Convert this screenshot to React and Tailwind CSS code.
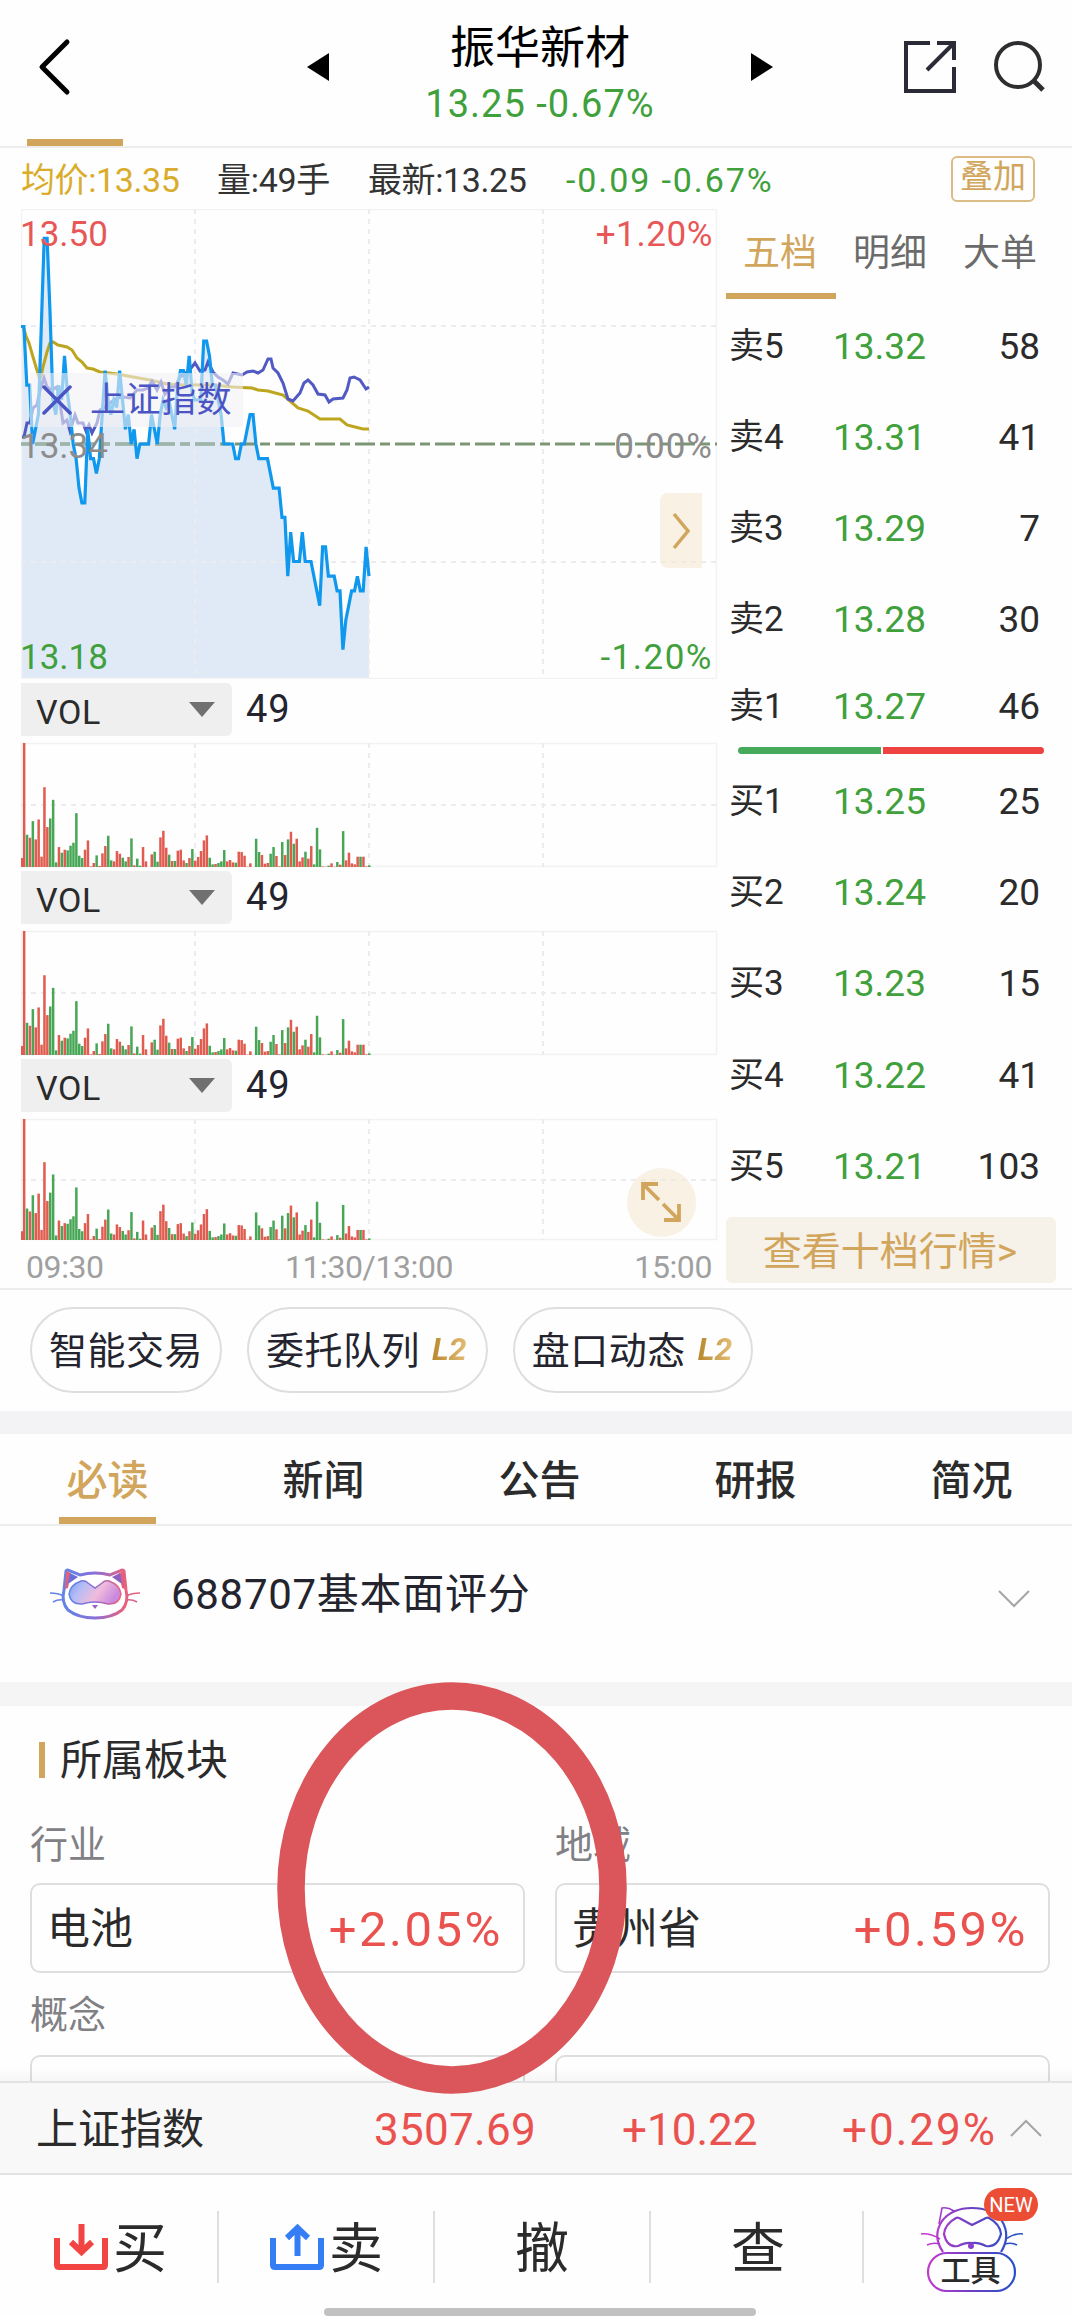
import React, { useState } from "react";

const PRICES = [
  42, 42, 38, 38, 34, 35, 36, 42, 48, 48, 43, 37, 36, 38, 37, 40, 37.5, 36, 34, 33,
  31, 30, 30, 35, 33, 33, 32, 33, 36, 39, 37, 36, 37, 36.5, 39, 37, 35, 36, 34, 35,
  33, 34, 34, 34, 34, 36, 35, 34, 36, 37, 36.5, 37, 36, 35, 38, 39, 39, 38, 40, 37.5,
  37, 37, 37, 41, 41, 40, 38, 38, 37, 36, 34, 34, 34, 34, 33, 33, 34, 34, 35, 36,
  36, 34, 33, 33, 33, 33, 32, 31, 31, 31, 29, 29, 25, 28, 26, 26, 26, 28, 26, 26,
  26, 25, 24, 23, 27, 27, 25, 25, 25, 24, 24, 20, 22, 23, 24, 24, 25, 24, 24, 27, 25,
];

const AVG_LINE =
  "2,117 5,127 8,134 12,148 18,168 20,168 22,158 26,143 29,134 32,133 37,136 46,138 51,141 56,149 61,153 66,159 72,160 79,163 96,165 112,168 129,171 146,175 162,176 192,176 212,178 231,179 237,181 247,182 262,186 269,192 277,199 287,202 299,210 319,210 326,216 334,218 342,220 348,220";

const INDEX_LINE =
  "1,228 3,228 6,214 9,214 12,199 16,196 19,181 23,169 26,178 31,181 36,178 39,194 42,214 46,211 49,222 54,206 57,214 62,214 65,222 68,216 71,224 76,214 79,201 84,198 89,194 96,189 102,188 109,189 116,181 122,181 127,179 131,172 136,181 140,173 144,185 149,178 154,178 159,168 166,163 171,158 174,154 179,162 184,161 187,153 192,163 197,168 202,171 207,175 212,164 221,166 226,163 232,162 237,164 242,161 247,150 250,150 252,159 257,164 262,174 267,190 272,192 279,184 283,174 287,171 292,176 297,185 304,186 308,193 312,190 322,189 326,181 329,169 333,168 339,171 345,180 348,178";

// one entry per minute: height (max 373) and direction
const VOLUMES =
  "27r 373r 97g 88r 138g 83r 143r 31r 240r 120r 146g 202g 14g 60r 43g 52r 50g 64g 73g 162g 34g 27g 52r 80r 2r 12r 35g 3r 41r 63r 94g 20g 17r 48r 40r 28g 17g 30r 86g 5r 25g 4g 60r 17r 0r 38r 46g 16g 89r 109r 58r 37g 18r 18g 49r 52r 20r 12g 27r 54g 19r 30r 48r 80r 95r 28g 8g 9r 12g 17g 51g 17r 21r 14r 13g 46r 45r 34r 1r 11r 0r 85g 45g 36r 10r 12r 40g 60g 33r 2r 75g 36r 83g 106r 70g 85r 17r 29r 46g 25r 63r 8g 118g 53g 2r 1r 4g 11r 1r 15g 7r 108g 20r 43r 11r 8r 31r 31g 31r 2r 5g"
    .split(" ")
    .map((v) => ({ size: parseInt(v, 10) / 373, up: v.endsWith("r") }));

const SELLS = [
  ["卖5", "13.32", "58"],
  ["卖4", "13.31", "41"],
  ["卖3", "13.29", "7"],
  ["卖2", "13.28", "30"],
  ["卖1", "13.27", "46"],
];

const BUYS = [
  ["买1", "13.25", "25"],
  ["买2", "13.24", "20"],
  ["买3", "13.23", "15"],
  ["买4", "13.22", "41"],
  ["买5", "13.21", "103"],
];

const STEP = 348 / 120;

const Grid = ({ height, rows }) => (
  <g stroke="#ececee" strokeWidth="2">
    <path d={`M0.5 0V${height}M695.5 0V${height}M0 0.5H696M0 ${height - 0.5}H696`} stroke="#f2f2f3" strokeWidth="1.5" />
    {[174, 348, 522].map((x) => (
      <path key={x} d={`M${x} 0V${height}`} strokeDasharray="5 5" />
    ))}
    {rows.map((y) => (
      <path key={y} d={`M0 ${y}H696`} strokeDasharray="5 5" />
    ))}
  </g>
);

const PriceChart = () => {
  const points = PRICES.map((p, i) => `${(i * STEP).toFixed(1)},${(235 - (p - 34) * 14.69).toFixed(1)}`).join(" ");
  return (
    <div className="relative h-[470px] w-[696px] text-[35px] leading-none">
      <svg width="696" height="470" className="block">
        <polygon points={`0,470 ${points} 348,470`} fill="#e0eaf6" />
        <Grid height={470} rows={[117, 353]} />
        <path d="M0 235H696" stroke="#7b9575" strokeWidth="3" strokeDasharray="20 5 10 5" strokeDashoffset="26" />
        <path d="M0 235H200" stroke="#9db4ab" strokeWidth="3" strokeDasharray="20 5 10 5" strokeDashoffset="26" />
        <polyline points={AVG_LINE} fill="none" stroke="#bda51f" strokeWidth="3" />
        <polyline points={INDEX_LINE} fill="none" stroke="#5159c2" strokeWidth="3" />
        <polyline points={points} fill="none" stroke="#0f98ee" strokeWidth="3.2" />
      </svg>

      {/* Overlay index tag */}
      <div className="absolute left-[9px] top-[164px] flex h-[54px] w-[213px] items-center bg-[#f2f0f3]/60 text-[#4a54c4]">
        <svg width="30" height="30" viewBox="0 0 30 30" className="ml-[12px] shrink-0">
          <path d="M2 2L28 28M28 2L2 28" stroke="#4a54c4" strokeWidth="3.5" strokeLinecap="round" />
        </svg>
        <span className="ml-[18px] whitespace-nowrap tracking-[0.5px]">上证指数</span>
      </div>

      <span className="absolute left-[-1px] top-[8px] text-[#e85757]">13.50</span>
      <span className="absolute right-[4px] top-[8px] tracking-[0.6px] text-[#e85757]">+1.20%</span>
      <span className="absolute left-[-1px] top-[220px] text-[#8c8c8c]">13.34</span>
      <span className="absolute right-[4px] top-[220px] tracking-[1px] text-[#8c8c8c]">0.00%</span>
      <span className="absolute left-[-1px] top-[431px] text-[#3fa03c]">13.18</span>
      <span className="absolute right-[4px] top-[431px] tracking-[1.5px] text-[#3fa03c]">-1.20%</span>

      <button className="absolute left-[639px] top-[284px] flex h-[75px] w-[42px] items-center justify-center rounded-l-lg bg-[#f4e8d2]/60">
        <svg width="20" height="38" viewBox="0 0 20 38">
          <path d="M3 2L17 19L3 36" fill="none" stroke="#d1a65c" strokeWidth="3.5" />
        </svg>
      </button>
    </div>
  );
};

const VolumePanel = ({ height }) => (
  <div>
    <div className="flex h-[64px] items-start pt-[4px]">
      <div className="flex h-[53px] w-[211px] items-center justify-between rounded-r-md bg-[#efefef] pl-[15px] pr-[16px]">
        <span className="pt-[4px] text-[34px] leading-none tracking-[0.6px] text-[#2b2b2b]">VOL</span>
        <svg width="28" height="15" viewBox="0 0 28 15">
          <path d="M1 0H27L14 15Z" fill="#707070" />
        </svg>
      </div>
      <span className="ml-[14px] mt-[7px] text-[38px] leading-none tracking-[1px] text-[#24242e]">49</span>
    </div>
    <svg width="696" height={height} className="block overflow-visible">
      <Grid height={height} rows={[Math.round(height / 2)]} />
      {VOLUMES.map((v, i) => (
        <rect
          key={i}
          x={Math.max(0, i * STEP - 1)}
          y={height - v.size * height}
          width="2.5"
          height={v.size * height}
          fill={v.up ? "#e05c50" : "#47a757"}
        />
      ))}
    </svg>
  </div>
);

const OrderRow = ({ row, className }) => (
  <div className={`flex items-center pt-[3px] text-[37px] leading-none ${className}`}>
    <span className="w-[104px] text-[35px] text-[#2b2b2b]">{row[0]}</span>
    <span className="text-[#3fa03c]">{row[1]}</span>
    <span className="ml-auto text-[#2b2b2b]">{row[2]}</span>
  </div>
);

const OrderBook = () => {
  const [tab, setTab] = useState("五档");
  return (
    <div className="ml-[9px] flex w-[330px] flex-col">
      <div className="flex h-[90px] text-[37px]">
        {["五档", "明细", "大单"].map((t) => (
          <button
            key={t}
            onClick={() => setTab(t)}
            className={`flex h-[90px] w-[110px] items-center justify-center border-b-[6px] pr-[2px] pt-[6px] ${
              t === tab ? "border-[#d1a65c] text-[#d1a65c]" : "border-transparent text-[#6b6b6b]"
            }`}
          >
            {t}
          </button>
        ))}
      </div>
      <div className="pl-[3px] pr-[16px]">
        {SELLS.map((row, i) => (
          <OrderRow key={row[0]} row={row} className={i === 4 ? "h-[84px]" : "h-[91px]"} />
        ))}
      </div>
      <div className="ml-[12px] flex h-[7px] gap-[2px]">
        <div className="w-[143px] rounded-l-full bg-[#45aa5a]" />
        <div className="w-[161px] rounded-r-full bg-[#ee4341]" />
      </div>
      <div className="pl-[3px] pr-[16px]">
        {BUYS.map((row) => (
          <OrderRow key={row[0]} row={row} className="h-[91.3px]" />
        ))}
      </div>
      <button className="mt-[7px] flex h-[66px] items-center justify-center rounded-md bg-[#f6f1e9] pr-[2px] pt-[4px] text-[39px] leading-none text-[#d1a65c]">
        查看十档行情&gt;
      </button>
    </div>
  );
};

const Chip = ({ label, level2 }) => (
  <button className="flex h-[86px] items-center gap-[12px] rounded-full border-2 border-[#dedede] px-[17px] pt-[2px] text-[38px] leading-none tracking-[0.5px] text-[#24242e]">
    {label}
    {level2 && (
      <span className="-mt-[5px] bg-gradient-to-r from-[#b8892c] to-[#e6bf78] bg-clip-text pr-[2px] text-[32px] font-bold italic tracking-normal text-transparent">
        L2
      </span>
    )}
  </button>
);

const CatIcon = () => (
  <svg width="90" height="52" viewBox="0 0 90 52" fill="none">
    <defs>
      <linearGradient id="catLine" x1="0" y1="0" x2="1" y2="0">
        <stop offset="0" stopColor="#5f86e6" />
        <stop offset="0.5" stopColor="#8a6fd8" />
        <stop offset="1" stopColor="#ef6078" />
      </linearGradient>
      <linearGradient id="catMask" x1="0" y1="0" x2="1" y2="0.3">
        <stop offset="0" stopColor="#7d9bf0" />
        <stop offset="0.3" stopColor="#b5bdf5" />
        <stop offset="0.65" stopColor="#f0bcdc" />
        <stop offset="1" stopColor="#c98ade" />
      </linearGradient>
    </defs>
    <path
      d="M14 22L16 3Q17 1 20 3L30 7Q45 3 60 7L70 3Q73 1 74 3L76 22Q79 34 72 42Q62 50 45 50Q28 50 18 42Q11 34 14 22Z"
      stroke="url(#catLine)"
      strokeWidth="3"
      fill="#fff"
    />
    <path d="M15 21L16 3L21 5L18 20Z" fill="#e0607f" />
    <path d="M75 21L74 3L69 5L72 20Z" fill="#e0607f" />
    <path d="M18 16L20 5L28 9Z" fill="#6a6fd8" />
    <path d="M72 16L70 5L62 9Z" fill="#8a5fc8" />
    <path
      d="M31 13Q35 12 38 15L45 20L52 15Q55 12 59 13Q70 17 71 26Q69 37 58 36Q51 34 45 34Q39 34 32 36Q21 37 19 26Q20 17 31 13Z"
      fill="url(#catMask)"
      stroke="url(#catLine)"
      strokeWidth="1.5"
    />
    <path d="M42 37H48L45 41Z" fill="#9a5fc0" />
    <path d="M0 25Q8 25 14 28M3 34Q8 31 14 32M90 25Q82 25 76 28M87 34Q82 31 76 32" stroke="url(#catLine)" strokeWidth="1.5" />
  </svg>
);

const ToolsIcon = () => (
  <div className="relative ml-[56px] h-[86px] w-[104px]">
    <svg width="104" height="86" viewBox="0 0 104 86" fill="none" className="block">
      <defs>
        <linearGradient id="toolLine" x1="8" y1="0" x2="96" y2="0" gradientUnits="userSpaceOnUse">
          <stop offset="0" stopColor="#c23ccc" />
          <stop offset="0.5" stopColor="#6a3fc4" />
          <stop offset="1" stopColor="#2452c8" />
        </linearGradient>
      </defs>
      <g stroke="url(#toolLine)" strokeWidth="2.2">
        <path d="M19 18L22 2Q28 1 34 5" strokeWidth="1.6" />
        <path d="M23 46Q12 30 22 15Q32 2 52 2Q72 2 82 15Q91 30 81 46" />
        <path d="M36 12Q38 11 41 13L52 19L64 13Q67 11 69 12Q80 18 81 28Q77 42 66 40Q58 36 52 37Q46 36 38 40Q27 42 24 28Q25 18 36 12Z" />
        <rect x="8" y="47" width="87" height="38" rx="19" fill="#fff" />
        <path d="M1 28Q10 27 20 33M7 39Q13 36 20 38M103 28Q94 27 86 33M97 39Q92 36 85 38" strokeWidth="1.5" />
      </g>
      <circle cx="51" cy="40" r="3" fill="#8a3fcc" />
    </svg>
    <span className="absolute left-[7px] top-[50px] w-[87px] text-center text-[30px] font-medium leading-[30px] text-[#2b2b2b]">工具</span>
    <span className="absolute left-[64px] top-[-18px] flex h-[33px] w-[54px] items-center justify-center rounded-full bg-[#ec4d35] text-[20px] text-white">
      NEW
    </span>
  </div>
);

const Board = ({ title, name, change }) => (
  <div className="w-[495px] shrink-0">
    <div className="flex h-[70px] items-center pb-[7px] text-[38px] leading-none text-[#808085]">{title}</div>
    <div className="flex h-[90px] items-center justify-between rounded-[10px] border-2 border-[#dedede] pl-[15px] pr-[20px] pt-[3px]">
      <span className="text-[43px] leading-none text-[#2b2b2b]">{name}</span>
      <span className="text-[49px] leading-none tracking-[2.5px] text-[#ea5250]">{change}</span>
    </div>
  </div>
);

export default function App() {
  const [active, setActive] = useState("必读");

  return (
    <div className="relative flex h-[2316px] w-[1072px] flex-col overflow-hidden bg-[#fefefe] font-[Roboto,'Noto_Sans_CJK_SC',sans-serif]">
      {/* Header */}
      <header className="flex h-[148px] shrink-0 flex-col border-b-2 border-[#ededed]">
        <div className="flex h-[140px] items-start">
          <svg width="34" height="58" viewBox="0 0 34 58" className="ml-[37px] mt-[38px]">
            <path d="M30 4L5 29L30 54" fill="none" stroke="#000" strokeWidth="5" strokeLinecap="round" strokeLinejoin="round" />
          </svg>
          <svg width="22" height="28" viewBox="0 0 22 28" className="ml-[236px] mt-[53px]">
            <path d="M22 0V28L0 14Z" />
          </svg>
          <div className="flex w-[422px] flex-col items-center">
            <h1 className="mt-[26px] text-[45px] leading-[45px] text-black">振华新材</h1>
            <p className="mt-[14px] text-[38px] leading-[38px] tracking-[1px] text-[#3fa03c]">13.25 -0.67%</p>
          </div>
          <svg width="22" height="28" viewBox="0 0 22 28" className="mt-[53px]">
            <path d="M0 0V28L22 14Z" />
          </svg>
          <svg width="54" height="54" viewBox="0 0 54 54" className="ml-[130px] mt-[40px]" fill="none" stroke="#2b2b38" strokeWidth="4">
            <path d="M27 3H3V51H51V27M34 3H51V20M51 3L24 30" />
          </svg>
          <svg width="54" height="54" viewBox="0 0 54 54" className="ml-[36px] mt-[40px]" fill="none" stroke="#2e2e30" strokeWidth="4">
            <circle cx="25" cy="25" r="22" />
            <path d="M40 40L50 50" strokeWidth="5" />
          </svg>
        </div>
        <div className="ml-[27px] h-[7px] w-[96px] shrink-0 bg-[#d1a65c]" />
      </header>

      {/* Quote summary */}
      <div className="flex h-[61px] shrink-0 items-center pl-[21px] pr-[37px] pt-[3px] text-[34px] leading-none">
        <span className="w-[196px] tracking-[-0.4px] text-[#d9ad2b]">均价:13.35</span>
        <span className="w-[151px] tracking-[-0.3px] text-[#333]">量:49手</span>
        <span className="w-[198px] tracking-[-0.4px] text-[#333]">最新:13.25</span>
        <span className="tracking-[1.9px] text-[#3fa03c]">-0.09 -0.67%</span>
        <button className="-mt-[3px] ml-auto flex h-[46px] w-[84px] items-center justify-center rounded-md border-2 border-[#dcbc85] pb-[4px] text-[33px] leading-none text-[#d1a65c]">
          叠加
        </button>
      </div>

      {/* Charts and order book */}
      <div className="flex h-[1081px] shrink-0 border-b-2 border-[#ededed] pl-[21px]">
        <div className="w-[696px]">
          <PriceChart />
          <VolumePanel height={124} />
          <VolumePanel height={124} />
          <div className="relative">
            <VolumePanel height={121} />
            <button className="absolute left-[606px] top-[113px] flex h-[69px] w-[69px] items-center justify-center rounded-full bg-[#f4e8d2]/60">
              <svg width="42" height="42" viewBox="0 0 42 42" fill="none" stroke="#d1a65c" strokeWidth="3.8" className="-ml-[2px] -mt-[2px]">
                <path d="M3 19V3H18M3 3L19 19M23 23L39 39M39 23V39H24" />
              </svg>
            </button>
          </div>
          <div className="flex h-[48px] items-center justify-between pl-[5px] pr-[5px] pt-[5px] text-[32px] leading-none tracking-[-0.4px] text-[#a0a0a0]">
            <span>09:30</span>
            <span>11:30/13:00</span>
            <span>15:00</span>
          </div>
        </div>
        <OrderBook />
      </div>

      <div className="flex h-[121px] shrink-0 items-start gap-[25px] pl-[30px] pt-[17px]">
        <Chip label="智能交易" />
        <Chip label="委托队列" level2 />
        <Chip label="盘口动态" level2 />
      </div>
      <div className="h-[23px] shrink-0 bg-[#f3f3f5]" />

      {/* Content tabs */}
      <nav className="flex h-[92px] shrink-0 justify-between border-b-2 border-[#ededed] pl-[59px] pr-[52px]">
        {["必读", "新闻", "公告", "研报", "简况"].map((t) => (
          <button
            key={t}
            onClick={() => setActive(t)}
            className={`flex w-[97px] items-center justify-center whitespace-nowrap border-b-[7px] pt-[12px] text-[41px] font-medium leading-none ${
              t === active ? "border-[#d1a65c] text-[#d1a65c]" : "border-transparent text-[#2b2b2b]"
            }`}
          >
            {t}
          </button>
        ))}
      </nav>
      <div className="flex h-[156px] shrink-0 items-start pl-[50px] pt-[42px]">
        <CatIcon />
        <span className="ml-[31px] mt-[6px] text-[42px] leading-none tracking-[0.7px] text-[#24242e]">688707基本面评分</span>
        <svg width="34" height="20" viewBox="0 0 34 20" className="ml-auto mr-[41px] mt-[21px]">
          <path d="M2 2L17 17L32 2" fill="none" stroke="#a5a5a8" strokeWidth="2" />
        </svg>
      </div>
      <div className="h-[24px] shrink-0 bg-[#f5f5f5]" />

      {/* Boards */}
      <section className="relative h-[375px] shrink-0 overflow-hidden pl-[30px] pr-[22px]">
        <div className="flex h-[107px] items-center gap-[15px] pl-[9px]">
          <span className="h-[36px] w-[6px] bg-[#d1a65c]" />
          <h2 className="pt-[3px] text-[42px] leading-none text-[#2b2b2b]">所属板块</h2>
        </div>
        <div className="flex gap-[30px]">
          <Board title="行业" name="电池" change="+2.05%" />
          <Board title="地域" name="贵州省" change="+0.59%" />
        </div>
        <div className="mt-[1px] flex h-[81px] items-center pt-[1px] text-[38px] leading-none text-[#808085]">概念</div>
        <div className="flex gap-[30px]">
          <div className="h-[90px] w-[495px] shrink-0 rounded-[10px] border-2 border-[#dedede]" />
          <div className="h-[90px] w-[495px] shrink-0 rounded-[10px] border-2 border-[#dedede]" />
        </div>
        <div className="absolute inset-x-0 bottom-0 h-[14px] bg-gradient-to-b from-transparent to-black/[0.03]" />
      </section>

      {/* Index bar */}
      <div className="flex h-[94px] shrink-0 items-center border-y-2 border-[#e2e2e2] bg-[#f8f8f8] pl-[36px] pt-[4px] text-[44px] leading-none text-[#ea5250]">
        <span className="w-[338px] text-[42px] text-[#2b2b2b]">上证指数</span>
        <span className="w-[248px] tracking-[0.3px]">3507.69</span>
        <span className="w-[220px]">+10.22</span>
        <span className="w-[167px] tracking-[2px]">+0.29%</span>
        <svg width="34" height="20" viewBox="0 0 34 20" className="-mt-[4px]">
          <path d="M2 18L17 3L32 18" fill="none" stroke="#a5a5a8" strokeWidth="2" />
        </svg>
      </div>

      {/* Trade actions */}
      <footer className="flex h-[133px] shrink-0 items-start pt-[36px] text-[54px] leading-none text-[#2b2b2b]">
        <button className="flex h-[72px] w-[219px] items-center gap-[5px] border-r-2 border-[#dfdfdf] pl-[54px]">
          <svg width="54" height="48" viewBox="0 0 54 48" fill="none" stroke="#f34444" strokeWidth="6">
            <path d="M3 15V42Q3 44 5 44H49Q51 44 51 42V15M27.500 1V28M17 19L27.500 29L38 19" />
          </svg>
          <span className="pt-[5px]">买</span>
        </button>
        <button className="flex h-[72px] w-[216px] items-center gap-[5px] border-r-2 border-[#dfdfdf] pl-[51px]">
          <svg width="54" height="50" viewBox="0 0 54 50" fill="none" stroke="#347df5" strokeWidth="6">
            <path d="M3 16V43Q3 45 5 45H49Q51 45 51 43V16M27.500 34V6M17 16L27.500 6L38 16" />
          </svg>
          <span className="pt-[5px]">卖</span>
        </button>
        <button className="flex h-[72px] w-[216px] items-center justify-center border-r-2 border-[#dfdfdf] pt-[5px]">撤</button>
        <button className="flex h-[72px] w-[213px] items-center justify-center border-r-2 border-[#dfdfdf] pl-[3px] pt-[5px]">查</button>
        <div className="-mt-[5px]">
          <ToolsIcon />
        </div>
      </footer>
      <div className="ml-[324px] h-[8px] w-[432px] shrink-0 rounded-full bg-[#c1c1c1]" />

      {/* Hand-drawn marker ring */}
      <svg width="350" height="412" viewBox="0 0 350 412" className="pointer-events-none absolute left-[277px] top-[1682px]">
        <ellipse cx="175" cy="206" rx="161" ry="192" fill="none" stroke="#db565b" strokeWidth="27.500" />
      </svg>
    </div>
  );
}
